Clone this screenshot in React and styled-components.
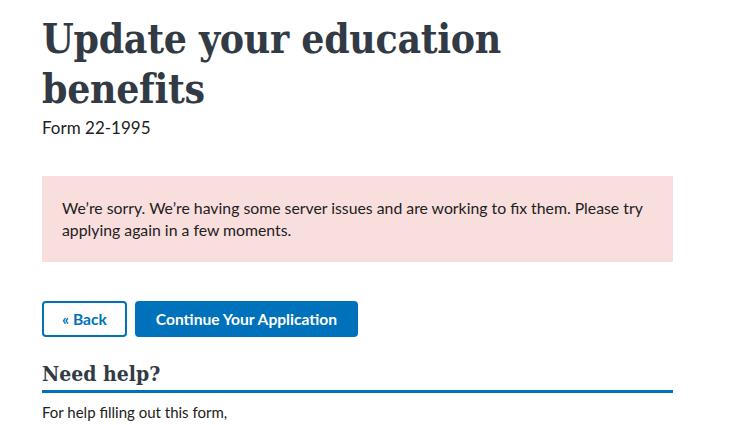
import styled, { createGlobalStyle } from "styled-components";

const GlobalStyle = createGlobalStyle`
  body {
    margin: 0;
    background: #fff;
    font-family: "Lato", "Liberation Sans", sans-serif;
    color: #212121;
  }
`;

const Page = styled.div`
  padding: 14px 80px 0 42px;
  width: 631px;
`;

const Title = styled.h1`
  font-family: "DejaVu Serif Condensed", "DejaVu Serif", serif;
  font-weight: bold;
  font-size: 40.5px;
  line-height: 50px;
  color: #323a45;
  margin: 0;
  letter-spacing: -0.3px;
`;

const Subtitle = styled.div`
  font-size: 17px;
  line-height: 24px;
  color: #212121;
  margin: 2px 0 0;
`;

const Alert = styled.div`
  margin-top: 36px;
  background: #f9dede;
  padding: 21px 20px;
  font-size: 15.8px;
  line-height: 22px;
  color: #212121;
`;

const Actions = styled.div`
  display: flex;
  gap: 8px;
  margin-top: 39px;
`;

const Button = styled.button`
  font-family: "Lato", "Liberation Sans", sans-serif;
  font-weight: bold;
  font-size: 15.6px;
  height: 36px;
  padding: 0 ${(p) => p.$pad || 18}px;
  border-radius: 4px;
  cursor: pointer;
  border: 2px solid #0071bb;
  background: ${(p) => (p.$primary ? "#0071bb" : "#fff")};
  color: ${(p) => (p.$primary ? "#fff" : "#0071bb")};
`;

const HelpHeading = styled.h2`
  font-family: "DejaVu Serif Condensed", "DejaVu Serif", serif;
  font-weight: bold;
  font-size: 21px;
  line-height: 28px;
  color: #323a45;
  margin: 23px 0 0;
  padding-bottom: 2px;
  border-bottom: 3px solid #0071bb;
`;

const HelpText = styled.p`
  font-size: 15px;
  line-height: 20px;
  margin: 9px 0 0;
`;

export default function App() {
  return (
    <>
      <GlobalStyle />
      <Page>
        <Title>
          Update your education
          <br />
          benefits
        </Title>
        <Subtitle>Form 22-1995</Subtitle>
        <Alert>
          We’re sorry. We’re having some server issues and are working to fix
          them. Please try applying again in a few moments.
        </Alert>
        <Actions>
          <Button $pad={18}>« Back</Button>
          <Button $primary $pad={19}>
            Continue Your Application
          </Button>
        </Actions>
        <HelpHeading>Need help?</HelpHeading>
        <HelpText>For help filling out this form,</HelpText>
      </Page>
    </>
  );
}
